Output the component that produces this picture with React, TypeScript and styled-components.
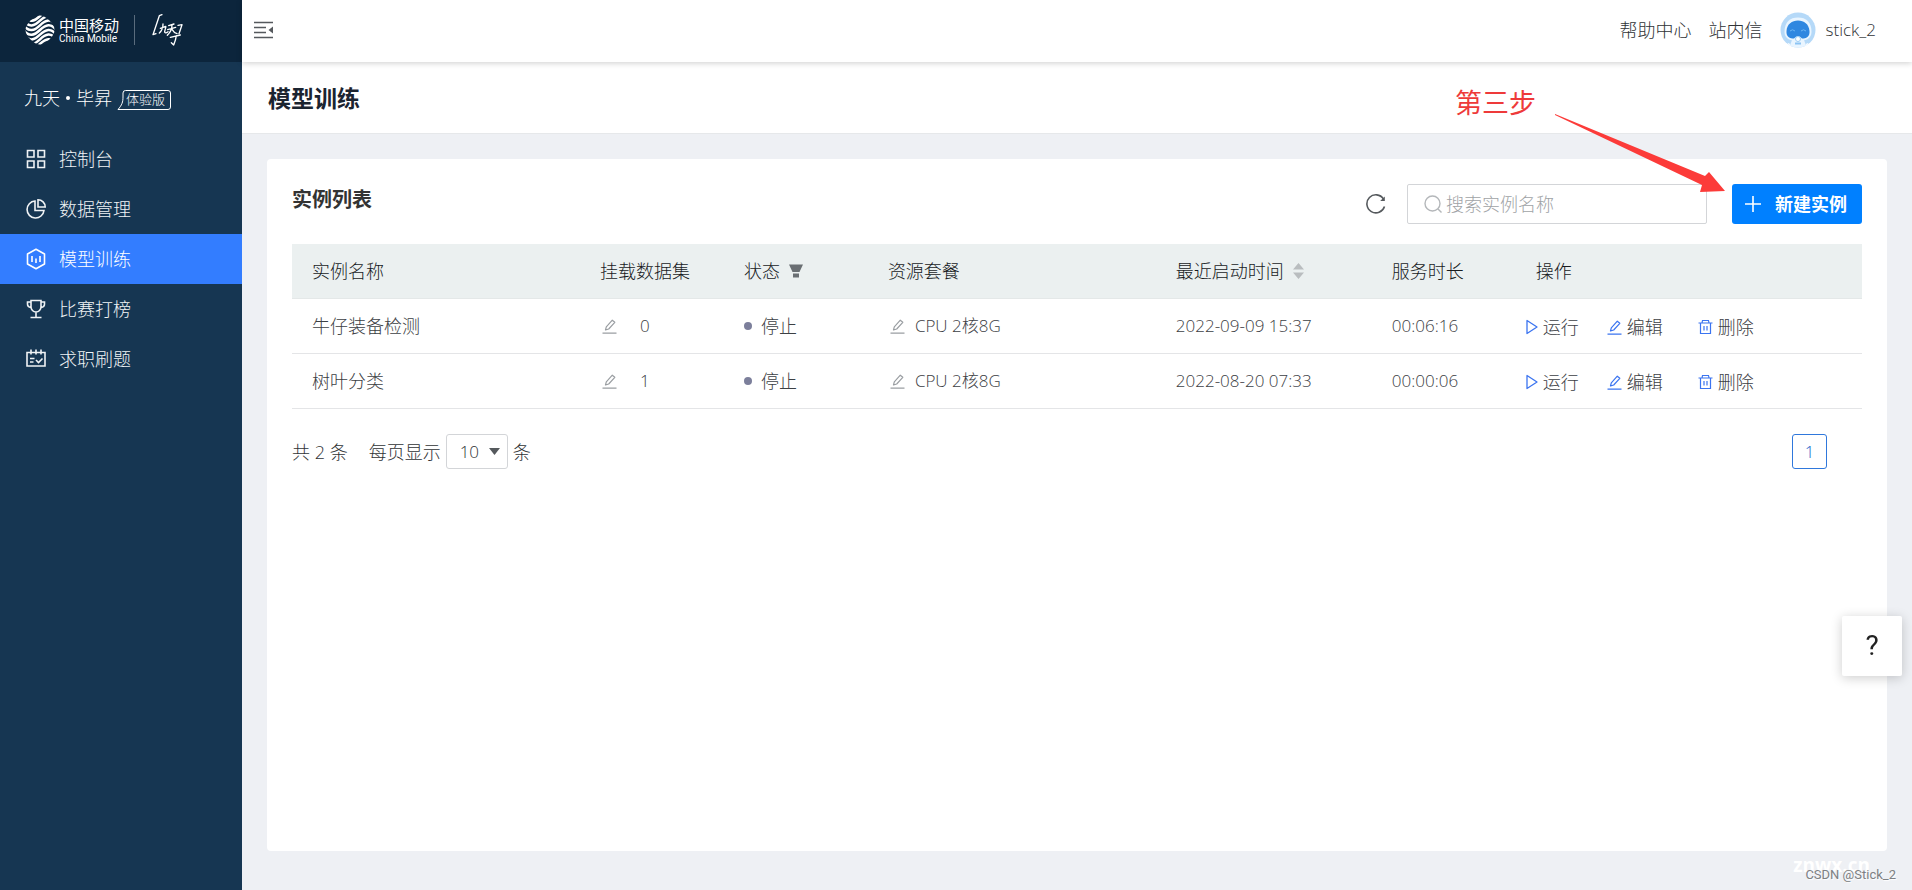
import React from "react";
import styled, { createGlobalStyle } from "styled-components";

const GlobalStyle = createGlobalStyle`
  *, *::before, *::after { box-sizing: border-box; }
  body { margin: 0; color: #303336; }
  body, button, input, select {
    font-family: "Open Sans", "Noto Sans CJK SC", sans-serif;
    font-size: 18px;
    font-weight: 300;
    line-height: 24px;
  }
  button { border: 0; background: none; padding: 0; color: inherit; cursor: pointer; }
  a { color: inherit; text-decoration: none; }
  svg { display: block; flex: none; }
  h1, h2 { margin: 0; }
`;

const Page = styled.div`
  display: flex;
  min-height: 100vh;
  background: #eef0f4;
`;

/* ---------- Sidebar ---------- */

const Sidebar = styled.aside`
  flex: none;
  width: 242px;
  background: #163652;
  color: #f0f3f5;
`;

const Brand = styled.div`
  display: flex;
  align-items: center;
  height: 62px;
  padding: 0 0 2px 25px;
  background: #0c253c;
  color: #fff;
`;

const BrandName = styled.div`
  display: flex;
  flex-direction: column;
  margin-left: 4px;
  font-family: "Noto Sans CJK SC", sans-serif;
  font-size: 15px;
  font-weight: 400;
  line-height: 17px;
`;

const BrandLatin = styled.span`
  font-family: Roboto, sans-serif;
  font-size: 10px;
  line-height: 12px;
`;

const BrandDivider = styled.span`
  width: 1px;
  height: 30px;
  margin: 0 17px 0 15px;
  background: #5a6c7d;
`;

const Product = styled.div`
  display: flex;
  align-items: center;
  height: 72px;
  padding-left: 24px;
  color: #fff;
`;

const ProductName = styled.span`
  display: flex;
  align-items: center;
  gap: 6px;
`;

const ProductDot = styled.i`
  width: 4px;
  height: 4px;
  border-radius: 50%;
  background: #fff;
`;

const Trial = styled.span`
  position: relative;
  width: 54px;
  height: 20px;
  margin: 3px 0 0 5px;
  padding-left: 9px;
  font-size: 13px;
  line-height: 19px;

  svg { position: absolute; inset: 0; }
`;

const NavItem = styled.a<{ $active?: boolean }>`
  display: flex;
  align-items: center;
  gap: 13px;
  height: 50px;
  padding-left: 26px;
  color: ${(p) => (p.$active ? "#fff" : "inherit")};
  background: ${(p) => (p.$active ? "#337dff" : "transparent")};
`;

/* ---------- Main column ---------- */

const Main = styled.div`
  display: flex;
  flex: 1;
  flex-direction: column;
  min-width: 0;
`;

const TopBar = styled.header`
  z-index: 1;
  display: flex;
  align-items: center;
  justify-content: space-between;
  height: 62px;
  padding: 0 36px 2px 12px;
  background: #fff;
  box-shadow: 0 1px 6px rgba(0, 0, 0, 0.2);
`;

const UserLinks = styled.nav`
  display: flex;
  align-items: center;
  gap: 17px;
`;

const User = styled.a`
  display: flex;
  align-items: center;
  gap: 10px;
  font-size: 17px;
`;

const TitleBar = styled.div`
  display: flex;
  align-items: center;
  height: 72px;
  padding-left: 26px;
  border-bottom: 1px solid #e6e8ea;
  background: #fff;
`;

const PageTitle = styled.h1`
  color: #1b2430;
  font-size: 23px;
  font-weight: 700;
  line-height: 32px;
`;

const Content = styled.main`
  display: flex;
  flex: 1;
  padding: 25px 25px 39px;
`;

const Card = styled.section`
  flex: 1;
  min-width: 0;
  padding: 25px;
  border-radius: 4px;
  background: #fff;
`;

const Toolbar = styled.div`
  display: flex;
  align-items: center;
  justify-content: space-between;
  height: 40px;
  margin-bottom: 20px;
`;

const CardTitle = styled.h2`
  align-self: flex-start;
  color: #333;
  font-size: 20px;
  font-weight: 700;
  line-height: 32px;
`;

const Tools = styled.div`
  display: flex;
  align-items: center;
  color: #5f6367;
`;

const SearchBox = styled.label`
  display: flex;
  align-items: center;
  gap: 4px;
  width: 300px;
  height: 40px;
  margin: 0 25px 0 21px;
  padding-left: 16px;
  border: 1px solid #d3d5d8;
  border-radius: 2px;
  color: #b4b7ba;
`;

const SearchInput = styled.input`
  flex: 1;
  min-width: 0;
  padding: 0;
  border: 0;
  outline: 0;
  background: transparent;

  &::placeholder { color: #a0a3a6; opacity: 1; }
`;

const CreateAnchor = styled.div`
  position: relative;
`;

const CreateButton = styled.button`
  display: flex;
  align-items: center;
  gap: 14px;
  width: 130px;
  height: 40px;
  padding-left: 13px;
  border-radius: 3px;
  background: #0080ff;
  color: #fff;
  font-weight: 700;
`;

const Callout = styled.div`
  position: absolute;
  top: -97px;
  right: 137px;
  z-index: 2;
  display: flex;
  gap: 19px;
  color: #ee3a3a;
  font-size: 27px;
  font-weight: 400;
  line-height: 32px;
  white-space: nowrap;
  pointer-events: none;

  svg { margin-top: 27px; }
`;

/* ---------- Table ---------- */

const Table = styled.table`
  width: 100%;
  table-layout: fixed;
  border-collapse: separate;
  border-spacing: 0;
`;

const HeadCell = styled.th<{ $width?: number }>`
  width: ${(p) => (p.$width ? `${p.$width}%` : "auto")};
  height: 55px;
  padding: 0 0 0 20px;
  border-bottom: 1px solid #e4e8e8;
  background: #ebf0f0;
  color: #181b1e;
  font-weight: 300;
  text-align: left;
`;

const HeadLabel = styled.span`
  display: flex;
  align-items: center;
  gap: 9px;
`;

const Cell = styled.td<{ $latin?: boolean; $indent?: number }>`
  height: 55px;
  padding: 0 0 0 ${(p) => p.$indent ?? 20}px;
  border-bottom: 1px solid #e4e5e7;
  color: #3c4044;
  font-size: ${(p) => (p.$latin ? 17 : 18)}px;
`;

const CellRow = styled.div<{ $gap: number }>`
  display: flex;
  align-items: center;
  gap: ${(p) => p.$gap}px;
`;

const IconButton = styled.button`
  color: #9a9ea2;
`;

const StatusDot = styled.i`
  width: 8px;
  height: 8px;
  border-radius: 50%;
  background: #7c7f9b;
`;

const Actions = styled.div`
  display: flex;
  padding-top: 2px;
`;

const Action = styled.button<{ $width: number }>`
  display: flex;
  align-items: center;
  gap: 5px;
  width: ${(p) => p.$width}px;

  svg { color: #3b74f0; }
`;

/* ---------- Pagination ---------- */

const Pager = styled.div`
  display: flex;
  align-items: center;
  height: 35px;
  margin-top: 25px;
  padding-right: 35px;
`;

const PageSize = styled.label`
  display: flex;
  align-items: center;
  gap: 5px;
  margin: 0 auto 0 21px;
`;

const SelectWrap = styled.span`
  position: relative;
  display: flex;
  height: 35px;

  svg { position: absolute; top: 14px; right: 8px; pointer-events: none; }
`;

const Select = styled.select`
  width: 62px;
  padding: 0 0 0 13px;
  border: 1px solid #d3d5d8;
  border-radius: 3px;
  appearance: none;
  background: #fff;
  color: #303336;
  font-size: 17px;
`;

const PageButton = styled.button`
  width: 35px;
  height: 35px;
  border: 1px solid #2f78dc;
  border-radius: 3px;
  color: #1864cc;
  font-size: 17px;
`;

/* ---------- Floating parts ---------- */

const HelpButton = styled.button`
  position: fixed;
  top: 616px;
  right: 10px;
  width: 60px;
  height: 60px;
  border-radius: 2px;
  background: #fff;
  box-shadow: 0 2px 12px rgba(0, 0, 0, 0.2);
  color: #222;
  font-family: Roboto, sans-serif;
  font-size: 28px;
  font-weight: 400;
`;

const SiteMark = styled.span`
  position: absolute;
  right: 42px;
  top: 853px;
  color: #fff;
  font-size: 19px;
  font-weight: 700;
`;

const AuthorMark = styled.span`
  position: absolute;
  right: 16px;
  top: 863px;
  color: #7d8083;
  font-family: Roboto, sans-serif;
  font-size: 13px;
  font-weight: 400;
  text-shadow: 1px 1px 1px #fff;
`;

/* ---------- Drawings ---------- */

const WAVE_OFFSETS = [-11, 3, 17, 31, 45, 59, 73, 87, 101];

const MobileLogo = () => (
  <svg width="30" height="30" viewBox="0 0 90 90" fill="none" aria-hidden="true">
    <clipPath id="logo-clip">
      <path d="M45 1C60 1 89 27 89 45S62 89 45 89 1 63 1 45 30 1 45 1Z" />
    </clipPath>
    <g clipPath="url(#logo-clip)" stroke="#fff" strokeWidth="7.5">
      {WAVE_OFFSETS.map((y) => (
        <path key={y} d={`M-4 ${y}C12 ${y + 22} 28 ${y + 16} 45 ${y}S78 ${y - 22} 94 ${y}`} />
      ))}
    </g>
  </svg>
);

const JiutianLogo = () => (
  <svg width="32" height="34" viewBox="0 0 96 102" fill="none" stroke="#fff" strokeWidth="4" strokeLinecap="round" strokeLinejoin="round" aria-hidden="true">
    <path d="M30 5 22 8 3 65 12 62" />
    <path d="M33 33C33 44 29 54 22 60M25 46 41 40C43 40 39 50 38 56 38 61 43 60 48 56" />
    <path d="M50 38 66 33M47 50 71 43M60 36C60 48 55 58 46 67M60 49C64 56 68 60 75 62" />
    <path d="M78 37 90 35 81 62M55 73 85 66M73 68C72 78 69 86 65 96L58 89" />
  </svg>
);

const TrialOutline = () => (
  <svg width="54" height="20" fill="none" stroke="#fff" aria-hidden="true">
    <path d="M1 19.5C5 15 6 12 6 7V3Q6 .5 8.500.5H51Q53.500.5 53.500 3V17Q53.500 19.500 51 19.500Z" />
  </svg>
);

const CollapseIcon = () => (
  <svg width="20" height="18" viewBox="0 0 20 18" aria-hidden="true">
    <path d="M0 1.500H19M0 6.500H12M0 11.500H12M0 16.500H19" stroke="#55595d" strokeWidth="1.500" />
    <path d="M19 5.500V12.500L14.500 9Z" fill="#55595d" />
  </svg>
);

const Avatar = () => (
  <svg width="36" height="36" viewBox="0 0 36 36" aria-hidden="true">
    <clipPath id="avatar-clip"><circle cx="18" cy="18" r="17.500" /></clipPath>
    <g clipPath="url(#avatar-clip)">
      <rect width="36" height="36" fill="#b5d9f8" />
      <path d="M4.500 20C4.500 10 10 5.500 18 5.500S31.500 10 31.500 20C31.500 27 25 29 18 29S4.500 27 4.500 20Z" fill="#e9f5ff" />
      <path d="M9 36 12 28H24L27 36Z" fill="#e9f5ff" />
      <path d="M6.500 19C7 12 12 8.500 18 8.500S29 12 29.500 19C30 25 26 26.500 22 26.500Q18 22 14 26.500C10 26.500 6 25 6.500 19Z" fill="#2f87e0" />
      <path d="M10 19Q12.500 16.500 15 19M21 19Q23.500 16.500 26 19" stroke="#6cb4f2" fill="none" />
      <circle cx="18" cy="27" r="2.500" fill="#fff" stroke="#9accf5" />
      <path d="M15 31.500H21" stroke="#8cc4f4" strokeWidth="2" />
      <path d="M0 36 9 31 12 36ZM36 36 27 31 24 36Z" fill="#fff" />
    </g>
  </svg>
);

const navProps = { width: 20, height: 20, viewBox: "0 0 20 20", fill: "none", stroke: "currentColor", strokeWidth: 1.6, "aria-hidden": true };

const GridIcon = () => (
  <svg {...navProps}>
    <path d="M1.500 1.500H8V8H1.500ZM12 1.500H18.500V8H12ZM1.500 12H8V18.500H1.500ZM12 12H18.500V18.500H12Z" />
  </svg>
);
const PieIcon = () => (
  <svg {...navProps}>
    <path d="M9 2A8.500 8.500 0 1 0 18 11.500H9Z" />
    <path d="M12 .8V8H19.200A7.200 7.200 0 0 0 12 .8Z" />
  </svg>
);
const ModelIcon = () => (
  <svg {...navProps} height={22} viewBox="0 -1 20 22">
    <path d="M10 .2 18.500 5V15L10 19.800 1.500 15V5Z" strokeLinejoin="round" />
    <path d="M6 7V13M10 9.500V14M14 7V13" />
  </svg>
);
const CupIcon = () => (
  <svg {...navProps}>
    <path d="M5 1.500H15V8A5 5 0 0 1 5 8ZM5 3H1.500V5Q1.500 8 5 8.500M15 3H18.500V5Q18.500 8 15 8.500M10 13V18M4.500 18.500H15.500" />
  </svg>
);
const CalendarIcon = () => (
  <svg {...navProps}>
    <path d="M1 3.500H19V17H1ZM5 .5V5.500M10 .5V5.500M15 .5V5.500M4 9.500H8.500M4 13H7.500M10 11 12.500 13.500 16.500 9.500" />
  </svg>
);

const RefreshIcon = () => (
  <svg width="20" height="20" viewBox="0 0 20 20" fill="none" stroke="#55595d" strokeWidth="1.600" aria-hidden="true">
    <path d="M18.500 12.500A9 9 0 1 1 17.500 5" />
    <path d="M18.800 2.500V7H14.200Z" fill="#55595d" stroke="none" />
  </svg>
);
const SearchIcon = () => (
  <svg width="18" height="18" viewBox="0 0 18 18" fill="none" stroke="currentColor" strokeWidth="1.400" aria-hidden="true">
    <circle cx="8.500" cy="8.500" r="7.500" />
    <path d="M14 14 17.500 17.500" />
  </svg>
);
const PlusIcon = () => (
  <svg width="16" height="16" viewBox="0 0 16 16" stroke="#fff" strokeWidth="1.600" aria-hidden="true">
    <path d="M0 8H16M8 0V16" />
  </svg>
);
const Arrow = () => (
  <svg width="170" height="80" viewBox="0 0 170 80" fill="#fc3b39" aria-hidden="true">
    <path d="M0 0 0 1 147 71 145 78 170 77 154 58 150 62Z" />
  </svg>
);
const FilterIcon = () => (
  <svg width="14" height="14" viewBox="0 0 14 14" fill="#6a6f73" aria-hidden="true">
    <path d="M0 .5H14L10.500 8H3.500ZM4 9.500H10V13.500H4Z" />
  </svg>
);
const SortIcon = () => (
  <svg width="11" height="16" viewBox="0 0 11 16" fill="#b9bdbf" aria-hidden="true">
    <path d="M5.500 0 11 6.500H0ZM5.500 16 0 9.500H11Z" />
  </svg>
);
const EditIcon = () => (
  <svg width="15" height="15" viewBox="0 0 15 15" fill="none" stroke="currentColor" strokeWidth="1.200" aria-hidden="true">
    <path d="M3.500 11 4.300 7.800 10.300 1.200 12.800 3.300 6.700 10ZM.5 14.200H14.500" strokeLinejoin="round" />
  </svg>
);
const PlayIcon = () => (
  <svg width="13" height="16" viewBox="0 0 13 16" fill="none" stroke="currentColor" strokeWidth="1.300" aria-hidden="true">
    <path d="M2 1.500V14.500L12 8Z" strokeLinejoin="round" />
  </svg>
);
const TrashIcon = () => (
  <svg width="15" height="16" viewBox="0 0 15 16" fill="none" stroke="currentColor" strokeWidth="1.200" aria-hidden="true">
    <path d="M.5 4H14.500M4 4 4.500 1.500H10.500L11 4M2.500 4V14.500H12.500V4M6 7V11.500M9 7V11.500" />
  </svg>
);
const CaretIcon = () => (
  <svg width="11" height="7" viewBox="0 0 11 7" fill="#55595d" aria-hidden="true">
    <path d="M0 0H11L5.500 7Z" />
  </svg>
);

/* ---------- Data ---------- */

const NAV = [
  { label: "控制台", icon: <GridIcon /> },
  { label: "数据管理", icon: <PieIcon /> },
  { label: "模型训练", icon: <ModelIcon />, active: true },
  { label: "比赛打榜", icon: <CupIcon /> },
  { label: "求职刷题", icon: <CalendarIcon /> },
];

const INSTANCES = [
  { name: "牛仔装备检测", datasets: 0, plan: "CPU 2核8G", started: "2022-09-09 15:37", duration: "00:06:16" },
  { name: "树叶分类", datasets: 1, plan: "CPU 2核8G", started: "2022-08-20 07:33", duration: "00:00:06" },
];

export default function App() {
  return (
    <Page>
      <GlobalStyle />
      <Sidebar>
        <Brand>
          <MobileLogo />
          <BrandName>
            中国移动
            <BrandLatin>China Mobile</BrandLatin>
          </BrandName>
          <BrandDivider />
          <JiutianLogo />
        </Brand>
        <Product>
          <ProductName>九天<ProductDot />毕昇</ProductName>
          <Trial><TrialOutline />体验版</Trial>
        </Product>
        <nav>
          {NAV.map((item) => (
            <NavItem key={item.label} href="#" $active={item.active}>
              {item.icon}
              {item.label}
            </NavItem>
          ))}
        </nav>
      </Sidebar>

      <Main>
        <TopBar>
          <button aria-label="收起菜单"><CollapseIcon /></button>
          <UserLinks>
            <a href="#">帮助中心</a>
            <a href="#">站内信</a>
            <User href="#"><Avatar />stick_2</User>
          </UserLinks>
        </TopBar>
        <TitleBar>
          <PageTitle>模型训练</PageTitle>
        </TitleBar>
        <Content>
          <Card>
            <Toolbar>
              <CardTitle>实例列表</CardTitle>
              <Tools>
                <button aria-label="刷新"><RefreshIcon /></button>
                <SearchBox>
                  <SearchIcon />
                  <SearchInput type="text" placeholder="搜索实例名称" aria-label="搜索实例名称" />
                </SearchBox>
                <CreateAnchor>
                  <CreateButton><PlusIcon />新建实例</CreateButton>
                  <Callout>第三步<Arrow /></Callout>
                </CreateAnchor>
              </Tools>
            </Toolbar>

            <Table>
              <thead>
                <tr>
                  <HeadCell $width={18.34}>实例名称</HeadCell>
                  <HeadCell $width={9.17}>挂载数据集</HeadCell>
                  <HeadCell $width={9.17}><HeadLabel>状态<FilterIcon /></HeadLabel></HeadCell>
                  <HeadCell $width={18.34}>资源套餐</HeadCell>
                  <HeadCell $width={13.76}><HeadLabel>最近启动时间<SortIcon /></HeadLabel></HeadCell>
                  <HeadCell $width={9.17}>服务时长</HeadCell>
                  <HeadCell>操作</HeadCell>
                </tr>
              </thead>
              <tbody>
                {INSTANCES.map((row) => (
                  <tr key={row.name}>
                    <Cell>{row.name}</Cell>
                    <Cell $latin $indent={22}>
                      <CellRow $gap={23}>
                        <IconButton aria-label="编辑数据集"><EditIcon /></IconButton>
                        {row.datasets}
                      </CellRow>
                    </Cell>
                    <Cell><CellRow $gap={9}><StatusDot />停止</CellRow></Cell>
                    <Cell $latin $indent={22}>
                      <CellRow $gap={10}>
                        <IconButton aria-label="编辑套餐"><EditIcon /></IconButton>
                        {row.plan}
                      </CellRow>
                    </Cell>
                    <Cell $latin>{row.started}</Cell>
                    <Cell $latin>{row.duration}</Cell>
                    <Cell $indent={9}>
                      <Actions>
                        <Action $width={82}><PlayIcon />运行</Action>
                        <Action $width={91}><EditIcon />编辑</Action>
                        <Action $width={60}><TrashIcon />删除</Action>
                      </Actions>
                    </Cell>
                  </tr>
                ))}
              </tbody>
            </Table>

            <Pager>
              <span>共 2 条</span>
              <PageSize>
                每页显示
                <SelectWrap>
                  <Select defaultValue="10">
                    <option>10</option>
                    <option>20</option>
                    <option>50</option>
                  </Select>
                  <CaretIcon />
                </SelectWrap>
                条
              </PageSize>
              <PageButton>1</PageButton>
            </Pager>
          </Card>
        </Content>
      </Main>

      <HelpButton aria-label="帮助">?</HelpButton>
      <SiteMark>znwx.cn</SiteMark>
      <AuthorMark>CSDN @Stick_2</AuthorMark>
    </Page>
  );
}
